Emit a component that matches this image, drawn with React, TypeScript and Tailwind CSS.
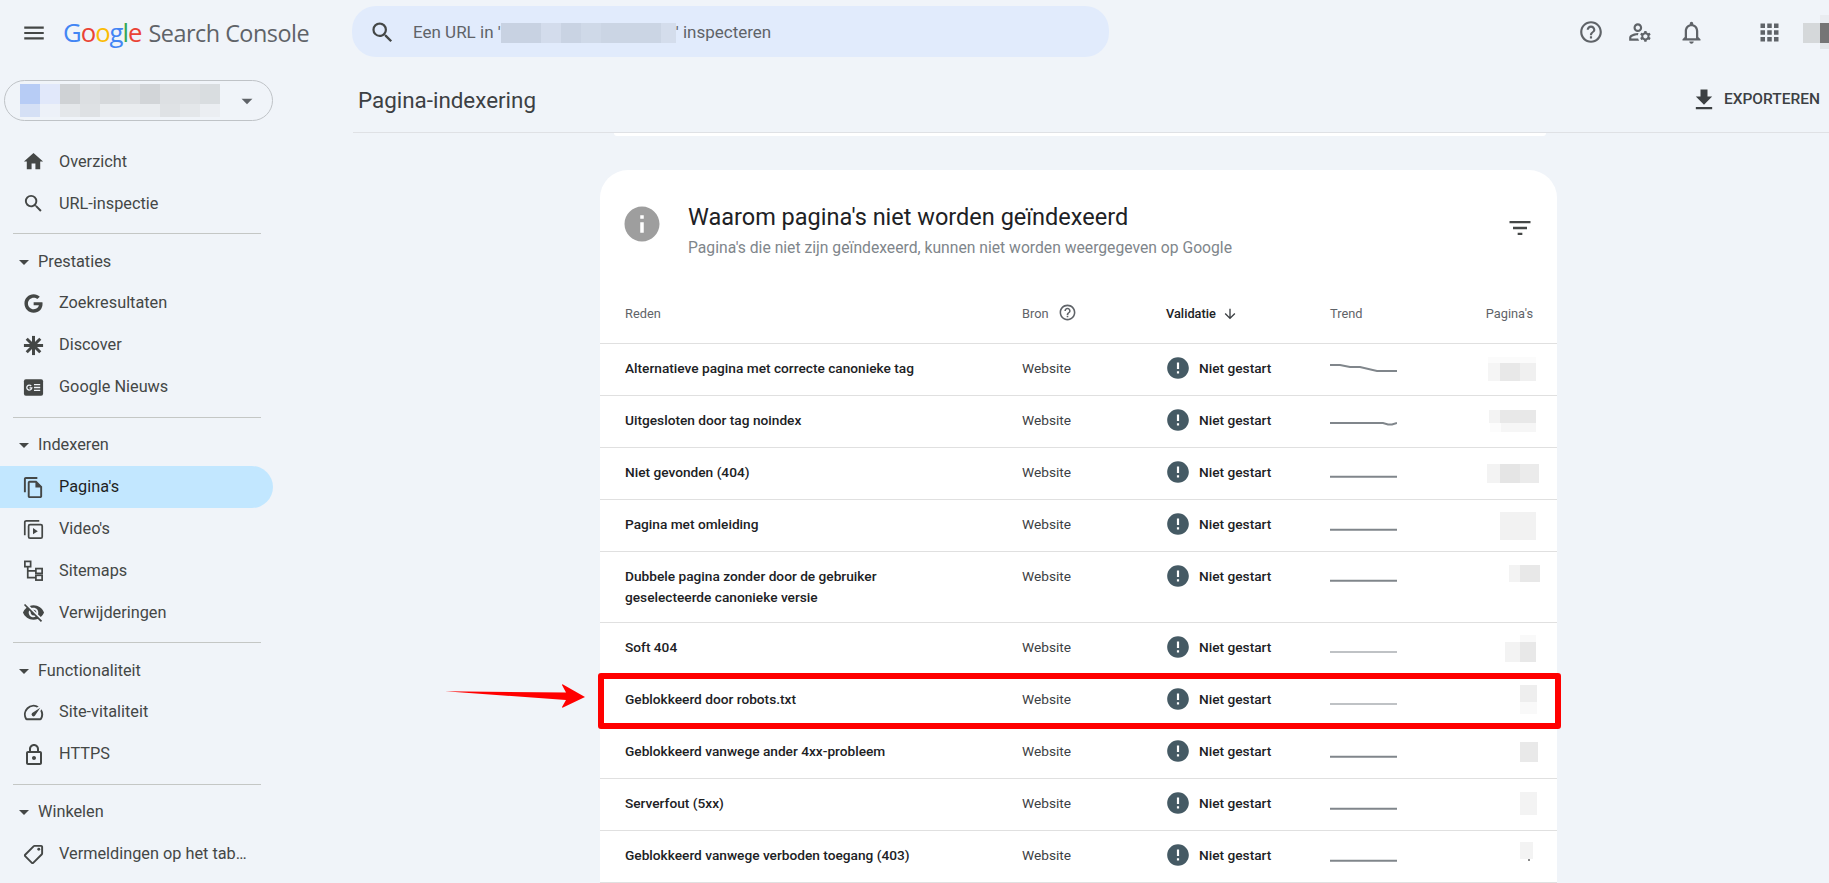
import React from "react";
import {
  MdMenu, MdSearch, MdHelpOutline, MdOutlineManageAccounts, MdOutlineNotifications, MdApps,
  MdFileDownload, MdFilterList, MdArrowDownward, MdInfo, MdError, MdHome, MdOutlineFileCopy,
  MdVisibilityOff, MdOutlineSpeed, MdOutlineHttps, MdOutlineLocalOffer, MdArrowDropDown,
} from "react-icons/md";
import { FaGoogle } from "react-icons/fa";

type Seg = { w: number; c: string };
type Band = { h: number; segs: Seg[] };

function Mosaic({ bands, className = "" }: { bands: Band[]; className?: string }) {
  return (
    <div className={"flex flex-col items-end " + className}>
      {bands.map((b, i) => (
        <div key={i} className="flex" style={{ height: b.h }}>
          {b.segs.map((s, j) => (
            <div key={j} style={{ width: s.w, background: s.c }} />
          ))}
        </div>
      ))}
    </div>
  );
}

function DiscoverIcon() {
  const rays = [0, 45, 90, 135];
  return (
    <svg viewBox="0 0 24 24" className="w-[23px] h-[23px]" fill="none" stroke="#444746" strokeWidth="3.1">
      {rays.map((r) => (
        <line key={r} x1="12" y1="2" x2="12" y2="22" transform={`rotate(${r} 12 12)`} />
      ))}
    </svg>
  );
}

function NewsIcon() {
  return (
    <svg viewBox="0 0 24 24" className="w-[23px] h-[23px]">
      <rect x="2" y="3.5" width="20" height="17" rx="2" fill="#444746" />
      <path d="M9.6 10.4a2.6 2.6 0 1 0 .6 2h-2.4" fill="none" stroke="#f0f4f9" strokeWidth="1.4" />
      <path d="M12.5 9h6.5M12.5 12h6.5M12.5 15h6.5" stroke="#f0f4f9" strokeWidth="1.4" />
    </svg>
  );
}

function VideoIcon() {
  return (
    <svg viewBox="0 0 24 24" className="w-[23px] h-[23px]" fill="none" stroke="#444746" strokeWidth="1.8">
      <path d="M2.9 18V4.5a1.6 1.6 0 0 1 1.6-1.6H18" />
      <rect x="6.9" y="6.9" width="14.2" height="14.2" rx="1.5" />
      <path d="M11.5 10.5v6.5l5-3.2z" fill="#444746" stroke="none" />
    </svg>
  );
}

function SitemapIcon() {
  return (
    <svg viewBox="0 0 24 24" className="w-[23px] h-[23px]" fill="none" stroke="#444746" strokeWidth="1.8">
      <rect x="3" y="2.5" width="6" height="5.5" />
      <rect x="14.5" y="10" width="6.5" height="5" />
      <rect x="14.5" y="17" width="6.5" height="5" />
      <path d="M6 8v11.5h8.5M6 12.5h8.5" />
    </svg>
  );
}

function Item({ icon, label, active }: { icon: React.ReactNode; label: string; active?: boolean }) {
  return (
    <div className={"flex items-center h-[41.9px] w-[273px] rounded-r-full " + (active ? "bg-[#c2e7ff] text-[#1f1f1f]" : "text-[#444746]")}>
      <div className="w-[46px] pl-[21px] flex justify-center shrink-0 text-[#444746]">{icon}</div>
      <span className="ml-[13px] text-[16.3px] whitespace-nowrap">{label}</span>
    </div>
  );
}

function Section({ label }: { label: string }) {
  return (
    <>
      <div className="mt-[8.5px] mb-[6.5px] ml-[13px] w-[248px] h-px bg-[#c4c7c5]" />
      <div className="flex items-center h-[41.9px] text-[#444746]">
        <MdArrowDropDown className="w-[24px] h-[24px] ml-[12px] text-[#444746]" />
        <span className="ml-[2px] text-[16.3px]">{label}</span>
      </div>
    </>
  );
}

const ic = "w-[23px] h-[23px]";

function Sidebar() {
  return (
    <aside className="w-[353px] shrink-0">
      <div className="ml-[4px] mt-[14px] w-[269px] h-[41px] border border-[#bfc3c7] rounded-full flex items-center relative">
        <Mosaic
          className="ml-[15px]"
          bands={[
            { h: 20, segs: [{ w: 20, c: "#b7ccf5" }, { w: 20, c: "#e1e8fa" }, { w: 20, c: "#cfd2d5" }, { w: 20, c: "#dcdfe2" }, { w: 20, c: "#d6d9dc" }, { w: 20, c: "#dcdfe2" }, { w: 20, c: "#d2d5d8" }, { w: 40, c: "#dde0e3" }, { w: 20, c: "#d9dde0" }] },
            { h: 13, segs: [{ w: 20, c: "#d5e0f5" }, { w: 20, c: "#edf1f8" }, { w: 20, c: "#e4e7ea" }, { w: 20, c: "#dee1e4" }, { w: 60, c: "#e9ecef" }, { w: 20, c: "#dfe2e5" }, { w: 20, c: "#e4e7ea" }, { w: 20, c: "#ebeef2" }] },
          ]}
        />
        <MdArrowDropDown className="w-[26px] h-[26px] ml-[14px] text-[#5f6368]" />
      </div>
      <div className="mt-[20px]">
        <Item icon={<MdHome className={ic} />} label="Overzicht" />
        <Item icon={<MdSearch className={ic} />} label="URL-inspectie" />
        <Section label="Prestaties" />
        <Item icon={<FaGoogle className="w-[19px] h-[19px]" />} label="Zoekresultaten" />
        <Item icon={<DiscoverIcon />} label="Discover" />
        <Item icon={<NewsIcon />} label="Google Nieuws" />
        <Section label="Indexeren" />
        <Item active icon={<MdOutlineFileCopy className={ic} />} label="Pagina's" />
        <Item icon={<VideoIcon />} label="Video's" />
        <Item icon={<SitemapIcon />} label="Sitemaps" />
        <Item icon={<MdVisibilityOff className={ic} />} label="Verwijderingen" />
        <Section label="Functionaliteit" />
        <Item icon={<MdOutlineSpeed className={ic} />} label="Site-vitaliteit" />
        <Item icon={<MdOutlineHttps className="w-[24px] h-[24px]" />} label="HTTPS" />
        <Section label="Winkelen" />
        <Item icon={<MdOutlineLocalOffer className={ic + " -scale-x-100"} />} label="Vermeldingen op het tab…" />
      </div>
    </aside>
  );
}

function Header() {
  return (
    <header className="h-[66px] flex shrink-0">
      <div className="w-[352px] flex items-center shrink-0">
        <MdMenu className="w-[26px] h-[26px] ml-[21px] text-[#444746]" />
        <div className="ml-[16px] flex items-baseline whitespace-nowrap font-['Open_Sans',sans-serif] text-[#5f6368]">
          <span className="text-[25.7px] tracking-[-1px]">
            <span className="text-[#4285f4]">G</span>
            <span className="text-[#ea4335]">o</span>
            <span className="text-[#fbbc05]">o</span>
            <span className="text-[#4285f4]">g</span>
            <span className="text-[#34a853]">l</span>
            <span className="text-[#ea4335]">e</span>
          </span>
          <span className="ml-[7px] text-[23.4px] tracking-[-0.5px]">Search Console</span>
        </div>
      </div>
      <div className="mt-[6px] w-[757px] h-[51px] pt-[3px] rounded-[24px] bg-[#e1ebfc] flex items-center">
        <MdSearch className="w-[27px] h-[27px] ml-[17px] -mt-[2px] text-[#444746]" />
        <span className="ml-[17px] text-[17px] text-[#5f6368] whitespace-nowrap">Een URL in '</span>
        <Mosaic
          bands={[{ h: 20, segs: [{ w: 40, c: "#c8d2e2" }, { w: 20, c: "#d3dcec" }, { w: 20, c: "#c9d3e3" }, { w: 20, c: "#cfd9e8" }, { w: 60, c: "#cbd5e4" }, { w: 15, c: "#d4ddec" }] }]}
        />
        <span className="text-[17px] text-[#5f6368] whitespace-nowrap">' inspecteren</span>
      </div>
      <div className="flex-1 flex items-center relative text-[#5f6368]">
        <div className="ml-[469px] flex items-center mb-[2px]">
          <MdHelpOutline className="w-[26px] h-[26px]" />
          <MdOutlineManageAccounts className="w-[26px] h-[26px] ml-[23px]" />
          <MdOutlineNotifications className="w-[27px] h-[27px] ml-[25px]" />
          <MdApps className="w-[27px] h-[27px] ml-[51px]" />
        </div>
        <Mosaic
          className="absolute right-0 top-[15px]"
          bands={[
            { h: 8, segs: [{ w: 9, c: "#e9ecf0" }] },
            { h: 20, segs: [{ w: 17, c: "#d5d8da" }, { w: 9, c: "#757575" }] },
            { h: 6, segs: [{ w: 9, c: "#e2e5e8" }] },
          ]}
        />
      </div>
    </header>
  );
}

type RowData = {
  reden: string[];
  trend: string;
  thin?: boolean;
  top: string;
  end: string;
  bands: Band[];
  hl?: boolean;
};

const flat = (y: number) => `M0 ${y}H67`;

const rows: RowData[] = [
  { reden: ["Alternatieve pagina met correcte canonieke tag"], trend: "M0 22H10L20 24H30L47 28H67", top: "pt-[13px]", end: "pr-[4px]", bands: [{ h: 6, segs: [{ w: 48, c: "#fbfbfb" }] }, { h: 18, segs: [{ w: 12, c: "#f5f5f5" }, { w: 20, c: "#e8e8e8" }, { w: 16, c: "#f0f0f0" }] }] },
  { reden: ["Uitgesloten door tag noindex"], trend: "M0 28H53L58 29.5L62 29.5L67 28", top: "pt-[14px]", end: "pr-[4px]", bands: [{ h: 13, segs: [{ w: 11, c: "#f3f3f3" }, { w: 36, c: "#e8e8e8" }] }, { h: 9, segs: [{ w: 11, c: "#fcfcfc" }, { w: 35, c: "#f6f6f6" }] }] },
  { reden: ["Niet gevonden (404)"], trend: flat(29.7), top: "pt-[16px]", end: "pr-[1px]", bands: [{ h: 19, segs: [{ w: 13, c: "#f3f3f3" }, { w: 20, c: "#e5e5e5" }, { w: 19, c: "#ebebeb" }] }] },
  { reden: ["Pagina met omleiding"], trend: flat(30.7), top: "pt-[12px]", end: "pr-[4px]", bands: [{ h: 28, segs: [{ w: 36, c: "#f2f2f2" }] }] },
  { reden: ["Dubbele pagina zonder door de gebruiker", "geselecteerde canonieke versie"], trend: flat(29.7), top: "pt-[13px]", end: "pr-0", bands: [{ h: 17, segs: [{ w: 11, c: "#f3f3f3" }, { w: 20, c: "#e8e8e8" }] }] },
  { reden: ["Soft 404"], trend: flat(30), thin: true, top: "pt-[12px]", end: "pr-[4px]", bands: [{ h: 7, segs: [{ w: 16, c: "#f9f9f9" }] }, { h: 20, segs: [{ w: 15, c: "#f3f3f3" }, { w: 16, c: "#e8e8e8" }] }] },
  { reden: ["Geblokkeerd door robots.txt"], trend: flat(30), thin: true, top: "pt-[10px]", end: "pr-[3px]", hl: true, bands: [{ h: 17, segs: [{ w: 17, c: "#eeeeee" }] }, { h: 12, segs: [{ w: 17, c: "#f9f9f9" }] }] },
  { reden: ["Geblokkeerd vanwege ander 4xx-probleem"], trend: flat(30.7), top: "pt-[15px]", end: "pr-[2px]", bands: [{ h: 20, segs: [{ w: 18, c: "#e9e9e9" }] }] },
  { reden: ["Serverfout (5xx)"], trend: flat(30.7), top: "pt-[13px]", end: "pr-[3px]", bands: [{ h: 23, segs: [{ w: 17, c: "#f3f3f3" }] }] },
  { reden: ["Geblokkeerd vanwege verboden toegang (403)"], trend: flat(30.7), top: "pt-[11px]", end: "pr-[7px]", bands: [{ h: 17, segs: [{ w: 13, c: "#f3f3f3" }] }, { h: 2, segs: [{ w: 2, c: "#8a8a8a" }, { w: 3, c: "transparent" }] }] },
];

const gridCols = "grid grid-cols-[397px_144px_164px_100px_110px]";

function Row({ r }: { r: RowData }) {
  return (
    <div className={gridCols + " relative pl-[25px] border-b border-[#e0e0e0] items-start " + (r.reden.length > 1 ? "h-[71px]" : "h-[52px]")}>
      <div className="pt-[14px] text-[13.7px] leading-[21px] font-medium text-[#202124]">
        {r.reden.map((t) => (
          <div key={t} className="whitespace-nowrap">{t}</div>
        ))}
      </div>
      <div className="pt-[14px] text-[13.7px] leading-[21px] text-[#3c4043]">Website</div>
      <div className="flex items-center h-[48px] -ml-[1px]">
        <MdError className="w-[26px] h-[26px] text-[#455a64]" />
        <span className="ml-[8px] text-[13.7px] font-medium text-[#202124] whitespace-nowrap">Niet gestart</span>
      </div>
      <svg viewBox="0 1 67 50" className="w-[67px] h-[50px]" fill="none" stroke="#80868b" strokeWidth={r.thin ? 1.2 : 1.9}>
        <path d={r.trend} />
      </svg>
      <div className={"flex justify-end " + r.top + " " + r.end}>
        <Mosaic bands={r.bands} />
      </div>
      {r.hl && (
        <>
          <div className="absolute -left-[2px] -right-[4px] -top-[2px] -bottom-[3px] border-[6px] border-[#ff0000] rounded-[3px] pointer-events-none" />
          <svg viewBox="0 0 143 24" className="absolute left-[-158px] top-[9px] w-[143px] h-[24px]">
            <path d="M3 7.2 L124 8.5 L120 1 Q120 0 121 0.5 L143 13 L121 23.6 Q120 24 120 23 L124 16 Z" fill="#ff0000" />
          </svg>
        </>
      )}
    </div>
  );
}

function Card() {
  return (
    <section className="w-[957px] ml-[247px] mt-[34px] bg-white rounded-t-[28px]">
      <div className="h-[124px] flex items-start relative pl-[25px]">
        <MdInfo className="w-[42px] h-[42px] text-[#9e9e9e] mt-[33px] -ml-[4px] shrink-0" />
        <div className="ml-[25px] mt-[31px]">
          <div className="text-[23.5px] leading-[32px] text-[#202124] whitespace-nowrap">Waarom pagina's niet worden geïndexeerd</div>
          <div className="text-[15.7px] leading-[24px] mt-[3px] text-[#80868b] whitespace-nowrap">Pagina's die niet zijn geïndexeerd, kunnen niet worden weergegeven op Google</div>
        </div>
        <MdFilterList className="absolute right-[23px] top-[44px] w-[28px] h-[28px] text-[#444746]" />
      </div>
      <div className={gridCols + " pl-[25px] h-[50px] items-center border-b border-[#e0e0e0] text-[12.8px] text-[#5f6368] pb-[9px]"}>
        <div>Reden</div>
        <div className="flex items-center">
          Bron
          <MdHelpOutline className="w-[19px] h-[19px] ml-[9px] -mt-[4px] text-[#5f6368]" />
        </div>
        <div className="flex items-center font-medium text-[#202124]">
          Validatie
          <MdArrowDownward className="w-[16px] h-[16px] ml-[6px] text-[#3c4043]" />
        </div>
        <div>Trend</div>
        <div className="text-right pr-[7px]">Pagina's</div>
      </div>
      {rows.map((r) => (
        <Row key={r.reden[0]} r={r} />
      ))}
    </section>
  );
}

export default function App() {
  return (
    <div className="w-full h-screen overflow-hidden bg-[#f0f4f9] flex flex-col font-['Roboto',sans-serif]">
      <Header />
      <div className="flex flex-1 min-h-0">
        <Sidebar />
        <main className="flex-1 min-w-0">
          <div className="h-[67px] border-b border-[#dfe1e5] flex items-center justify-between">
            <h1 className="ml-[5px] mt-[3px] text-[22.4px] text-[#3c4043]">Pagina-indexering</h1>
            <div className="flex items-center mr-[9px] text-[#3c4043] mt-[1px]">
              <MdFileDownload className="w-[28px] h-[28px]" />
              <span className="ml-[6px] text-[15.5px] font-medium">EXPORTEREN</span>
            </div>
          </div>
          <div className="ml-[261px] w-[932px] h-[3px] bg-white rounded-b-[6px]" />
          <Card />
        </main>
      </div>
    </div>
  );
}
